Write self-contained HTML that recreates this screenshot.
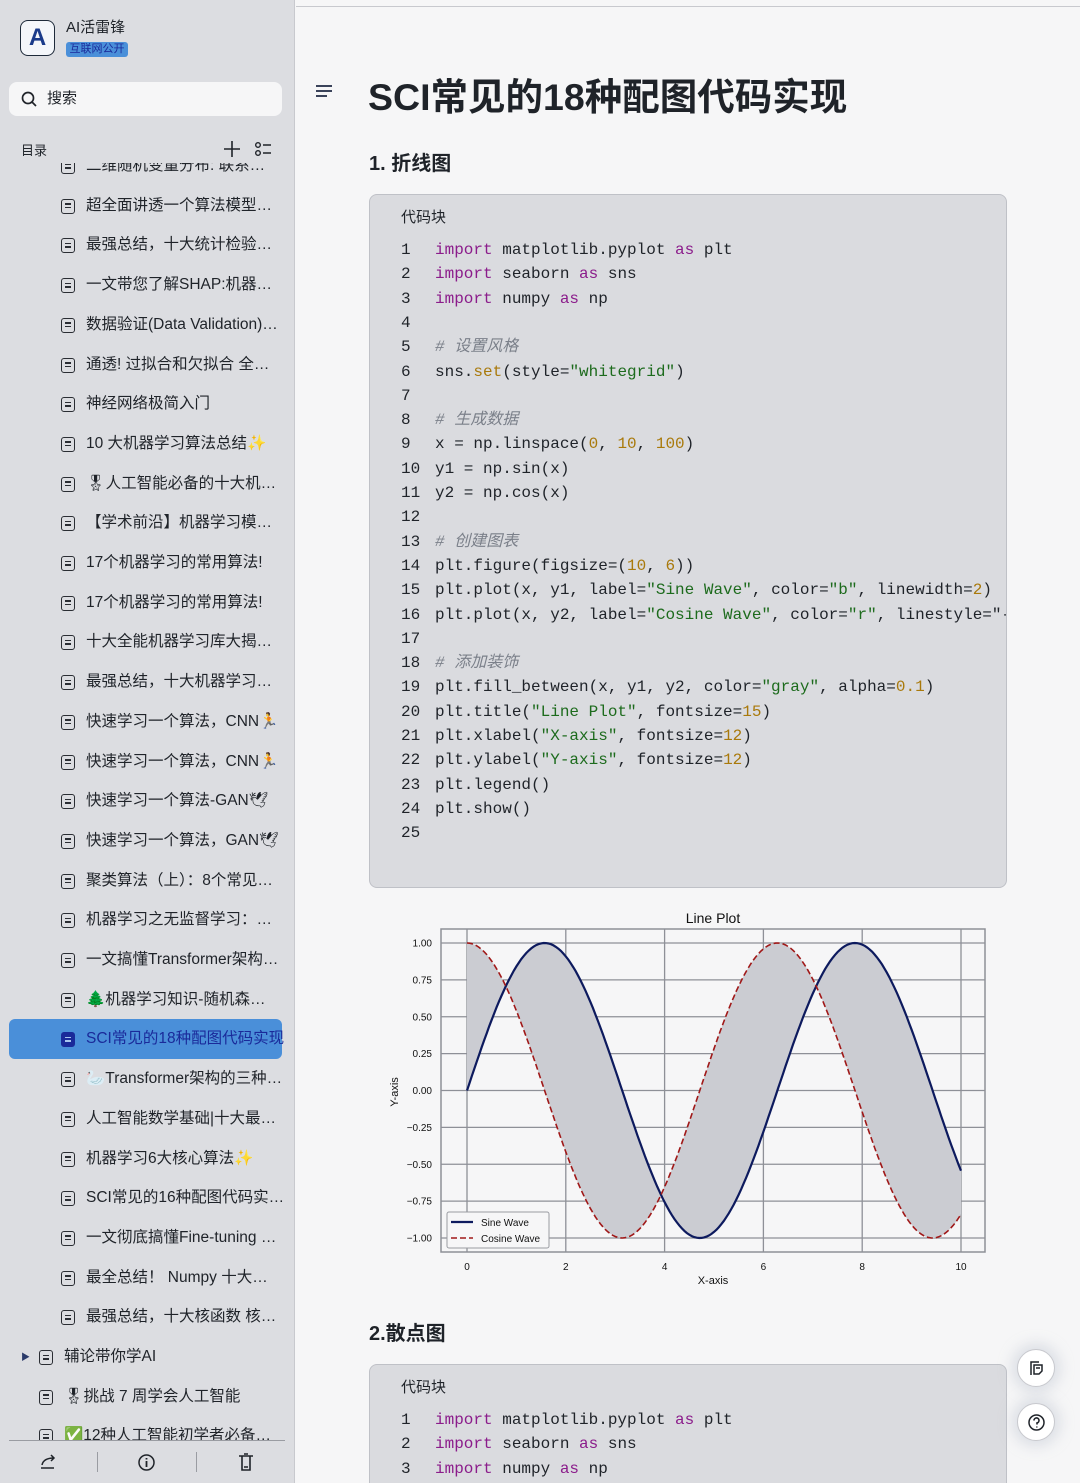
<!DOCTYPE html>
<html><head><meta charset="utf-8">
<style>
*{margin:0;padding:0;box-sizing:border-box}
html,body{width:1080px;height:1483px;overflow:hidden}
body{background:#f6f6f7;font-family:"Liberation Sans","Noto Sans CJK SC",sans-serif;color:#1f2329;position:relative}
.sb{position:absolute;left:0;top:0;width:295px;height:1483px;background:#dcdde1;border-right:1px solid #c8c9ce;overflow:hidden}
.logo{position:absolute;left:20px;top:20px;width:35px;height:36px;border:1.5px solid #1e2a3a;border-radius:8px;background:#f4f6fa;font:bold 24px "Liberation Sans",sans-serif;color:#1a3a8a;text-align:center;line-height:33px}
.name{position:absolute;left:66px;top:16px;font-size:15px;color:#1f2329}
.badge{position:absolute;left:66px;top:42px;width:62px;height:15px;background:#4a8fd9;border-radius:3px;color:#1a2a9a;font-size:11px;line-height:15px;text-align:center}
.search{position:absolute;left:9px;top:82px;width:273px;height:34px;background:#f6f6f7;border-radius:8px;font-size:15px;line-height:34px;padding-left:38px}
.toc{position:absolute;left:21px;top:140px;font-size:13px}
.clip{position:absolute;left:0;top:163px;width:295px;height:1277px;overflow:hidden}
.item{position:absolute;left:0;width:295px;height:40px;font-size:15.5px;line-height:40px;white-space:nowrap}
.item .ic{position:absolute;left:61px;top:13px;width:14px;height:15px;border:1.6px solid #2a2d33;border-radius:3px}
.item .ic:before,.item .ic:after{content:"";position:absolute;left:2.5px;height:1.6px;background:#2a2d33}
.item .ic:before{top:3.5px;width:6px}.item .ic:after{top:7px;width:6px}
.item .t{position:absolute;left:86px}
.sel{left:9px;width:273px;background:#4a8fd9;border-radius:6px;color:#1a2a9a}
.sel .ic{left:52px;background:#1a2a9a;border-color:#1a2a9a}
.sel .ic:before,.sel .ic:after{background:#a9c6ef}
.sel .t{left:77px}
.bot{position:absolute;left:9px;top:1440px;width:276px;height:43px;border-top:1px solid #9a9ca2;background:#dcdde1}
.topline{position:absolute;left:296px;top:6px;right:0;height:1px;background:#c8c9ce}
h1{position:absolute;left:368px;top:66px;font-size:37.5px;font-weight:bold;white-space:nowrap;letter-spacing:0}
h2{position:absolute;left:369px;font-size:20px;font-weight:bold}
.code{position:absolute;left:369px;width:638px;background:#dadbdf;border:1px solid #bfc1c7;border-radius:8px;overflow:hidden}
.code .hd{position:absolute;left:31px;top:11px;font-size:15px}
.ln{position:absolute;left:0;width:637px;height:24px;font:16px "Liberation Mono","Noto Sans CJK SC",monospace;white-space:pre;line-height:24px}
.ln .n{position:absolute;left:31px}
.ln .c{position:absolute;left:65px}
.k{color:#8b1c8b}.s{color:#1d6b1d}.d{color:#a9790b}.m{color:#7b808a;font-style:italic}.f{color:#a9790b}
.fb{position:absolute;left:1017px;width:38px;height:38px;border-radius:50%;background:#fff;border:1px solid #c8c9ce;box-shadow:0 0 12px 6px rgba(200,205,215,.5)}
</style></head><body>
<div class="sb">
<div class="logo">A</div>
<div class="name">AI活雷锋</div>
<div class="badge">互联网公开</div>
<div class="search">搜索</div>
<svg style="position:absolute;left:21px;top:91px" width="17" height="17" viewBox="0 0 17 17"><circle cx="7" cy="7" r="5.5" fill="none" stroke="#1f2329" stroke-width="1.7"/><path d="M11 11l4 4" stroke="#1f2329" stroke-width="1.7"/></svg>
<div class="toc">目录</div>
<svg style="position:absolute;left:223px;top:140px" width="50" height="18" viewBox="0 0 50 18"><path d="M9 1v16M1 9h16" stroke="#1f2329" stroke-width="1.6"/><circle cx="35" cy="5" r="2.3" fill="none" stroke="#1f2329" stroke-width="1.4"/><circle cx="35" cy="13" r="2.3" fill="none" stroke="#1f2329" stroke-width="1.4"/><path d="M40 5h8M40 13h8" stroke="#1f2329" stroke-width="1.6"/></svg>
<div class="clip"><div id="items"></div></div>
<div class="bot">
<svg style="position:absolute;left:30px;top:12px" width="20" height="18" viewBox="0 0 20 18"><path d="M2 15h13M3 12c1-5 5-7 12-7M12 2l3 3-3 3" fill="none" stroke="#1f2329" stroke-width="1.5"/></svg>
<div style="position:absolute;left:88px;top:11px;width:1px;height:20px;background:#9a9ca2"></div>
<svg style="position:absolute;left:128px;top:12px" width="19" height="19" viewBox="0 0 19 19"><circle cx="9.5" cy="9.5" r="7.5" fill="none" stroke="#1f2329" stroke-width="1.5"/><path d="M9.5 8v6M9.5 5v1.5" stroke="#1f2329" stroke-width="1.8"/></svg>
<div style="position:absolute;left:187px;top:11px;width:1px;height:20px;background:#9a9ca2"></div>
<svg style="position:absolute;left:228px;top:12px" width="18" height="19" viewBox="0 0 18 19"><path d="M2 3h14M5 3v14h8V3M7 1h4M7 14h4" fill="none" stroke="#1f2329" stroke-width="1.6"/></svg>
</div>
</div>
<div class="topline"></div>
<svg style="position:absolute;left:315px;top:84px" width="18" height="14" viewBox="0 0 18 14"><path d="M1 2h16M1 7h16M1 12h11" stroke="#1f2a44" stroke-width="1.8"/></svg>
<h1>SCI常见的18种配图代码实现</h1>
<h2 style="top:147px">1. 折线图</h2>
<div class="code" style="top:194px;height:694px"><div class="hd">代码块</div><div id="c1"></div></div>
<svg style="position:absolute;left:380px;top:900px" width="620" height="400" viewBox="380 900 620 400" font-family="Liberation Sans,sans-serif">
<rect x="441" y="929" width="544" height="323" fill="#f6f6f7" stroke="#8e9097" stroke-width="1.5"/>
<g stroke="#8e9097" stroke-width="1.3" id="grid"></g>
<path id="fill" fill="#cbccd2"/>
<path id="sin" fill="none" stroke="#0d1a5e" stroke-width="2.2"/>
<path id="cos" fill="none" stroke="#a01818" stroke-width="1.6" stroke-dasharray="6,3"/>
<text x="713" y="923" font-size="14" text-anchor="middle" fill="#111">Line Plot</text>
<text x="713" y="1284" font-size="11" text-anchor="middle" fill="#111">X-axis</text>
<text transform="translate(398,1092) rotate(-90)" font-size="11" text-anchor="middle" fill="#111">Y-axis</text>
<g font-size="10" fill="#111" text-anchor="end" id="yl"></g>
<g font-size="10" fill="#111" text-anchor="middle" id="xl"></g>
<rect x="447" y="1212" width="102" height="36" fill="#f6f6f7" stroke="#9a9ca2" rx="2"/>
<path d="M451 1222h22" stroke="#0d1a5e" stroke-width="2.2"/><path d="M451 1238h22" stroke="#a01818" stroke-width="1.6" stroke-dasharray="6,3"/>
<text x="481" y="1226" font-size="10" fill="#111">Sine Wave</text>
<text x="481" y="1242" font-size="10" fill="#111">Cosine Wave</text>
</svg>
<h2 style="top:1317px">2.散点图</h2>
<div class="code" style="top:1364px;height:140px"><div class="hd">代码块</div><div id="c2"></div></div>
<div class="fb" style="top:1349px"><svg style="position:absolute;left:10px;top:9px" width="17" height="18" viewBox="0 0 17 18"><path d="M3 16V3h8M6 6h8v6l-3 3H6z" fill="none" stroke="#1f2329" stroke-width="1.5"/><path d="M8 9h4" stroke="#1f2329" stroke-width="1.5"/></svg></div>
<div class="fb" style="top:1403px"><svg style="position:absolute;left:9px;top:9px" width="19" height="19" viewBox="0 0 19 19"><circle cx="9.5" cy="9.5" r="7.5" fill="none" stroke="#1f2329" stroke-width="1.5"/><path d="M7 7.5a2.5 2.5 0 1 1 3 2.4v1.6M9.8 13.5v1" fill="none" stroke="#1f2329" stroke-width="1.6"/></svg></div>
<script>
var items=["二维随机变量分布: 联系…","超全面讲透一个算法模型…","最强总结，十大统计检验…","一文带您了解SHAP:机器…","数据验证(Data Validation)…","通透! 过拟合和欠拟合 全…","神经网络极简入门","10 大机器学习算法总结✨","🎖人工智能必备的十大机…","【学术前沿】机器学习模…","17个机器学习的常用算法!","17个机器学习的常用算法!","十大全能机器学习库大揭…","最强总结，十大机器学习…","快速学习一个算法，CNN🏃","快速学习一个算法，CNN🏃","快速学习一个算法-GAN🕊","快速学习一个算法，GAN🕊","聚类算法（上）：8个常见…","机器学习之无监督学习：…","一文搞懂Transformer架构…","🌲机器学习知识-随机森…","SCI常见的18种配图代码实现","🦢Transformer架构的三种…","人工智能数学基础|十大最…","机器学习6大核心算法✨","SCI常见的16种配图代码实…","一文彻底搞懂Fine-tuning …","最全总结！ Numpy 十大…","最强总结，十大核函数 核…"];
var off=-163+1;
var h="";items.forEach(function(t,i){var y=145+i*39.7+off;h+='<div class="item'+(i==22?' sel':'')+'" style="top:'+y+'px"><div class="ic"></div><div class="t">'+t+'</div></div>';});
var y0=145+30*39.7+off;
h+='<div class="item" style="top:'+y0+'px;left:-22px"><span style="position:absolute;left:43px;font-size:9px;color:#2a3a6a">▶</span><div class="ic"></div><div class="t">辅论带你学AI</div></div>';
h+='<div class="item" style="top:'+(y0+39.7)+'px;left:-22px"><div class="ic"></div><div class="t">🎖挑战 7 周学会人工智能</div></div>';
h+='<div class="item" style="top:'+(y0+79.4)+'px;left:-22px"><div class="ic"></div><div class="t">✅12种人工智能初学者必备…</div></div>';
document.getElementById("items").innerHTML=h;
function K(s){return '<span class="k">'+s+'</span>'}function S(s){return '<span class="s">'+s+'</span>'}function D(s){return '<span class="d">'+s+'</span>'}function M(s){return '<span class="m">'+s+'</span>'}
var L=[K("import")+" matplotlib.pyplot "+K("as")+" plt",K("import")+" seaborn "+K("as")+" sns",K("import")+" numpy "+K("as")+" np","",M("# 设置风格"),'sns.<span class="f">set</span>(style='+S('"whitegrid"')+')',"",M("# 生成数据"),"x = np.linspace("+D("0")+", "+D("10")+", "+D("100")+")","y1 = np.sin(x)","y2 = np.cos(x)","",M("# 创建图表"),"plt.figure(figsize=("+D("10")+", "+D("6")+"))",'plt.plot(x, y1, label='+S('"Sine Wave"')+', color='+S('"b"')+', linewidth='+D("2")+')','plt.plot(x, y2, label='+S('"Cosine Wave"')+', color='+S('"r"')+', linestyle="--")',"",M("# 添加装饰"),'plt.fill_between(x, y1, y2, color='+S('"gray"')+', alpha='+D("0.1")+')','plt.title('+S('"Line Plot"')+', fontsize='+D("15")+')','plt.xlabel('+S('"X-axis"')+', fontsize='+D("12")+')','plt.ylabel('+S('"Y-axis"')+', fontsize='+D("12")+')',"plt.legend()","plt.show()",""];
function code(id,arr){var o="";arr.forEach(function(l,i){o+='<div class="ln" style="top:'+(43+i*24.3)+'px"><span class="n">'+(i+1)+'</span><span class="c">'+l+'</span></div>';});document.getElementById(id).innerHTML=o;}
code("c1",L);code("c2",L.slice(0,3));
var X=function(x){return 467+49.4*x},Y=function(y){return 1090.5-147.5*y};
var g="",yl="",xl="";for(var i=0;i<=8;i++){var v=1-i*0.25;g+='<path d="M441 '+Y(v)+'H985"/>';yl+='<text x="432" y="'+(Y(v)+3.5)+'">'+(v<0?'−':'')+Math.abs(v).toFixed(2)+'</text>';}
for(var j=0;j<=10;j+=2){g+='<path d="M'+X(j)+' 929V1252"/>';xl+='<text x="'+X(j)+'" y="1270">'+j+'</text>';}
document.getElementById("grid").innerHTML=g;document.getElementById("yl").innerHTML=yl;document.getElementById("xl").innerHTML=xl;
var s="",c="",cb=[];for(var k=0;k<=200;k++){var x=k/20;s+=(k?"L":"M")+X(x).toFixed(1)+" "+Y(Math.sin(x)).toFixed(1);c+=(k?"L":"M")+X(x).toFixed(1)+" "+Y(Math.cos(x)).toFixed(1);cb.unshift("L"+X(x).toFixed(1)+" "+Y(Math.cos(x)).toFixed(1));}
document.getElementById("sin").setAttribute("d",s);document.getElementById("cos").setAttribute("d",c);document.getElementById("fill").setAttribute("d",s+cb.join("")+"Z");
</script>
</body></html>
